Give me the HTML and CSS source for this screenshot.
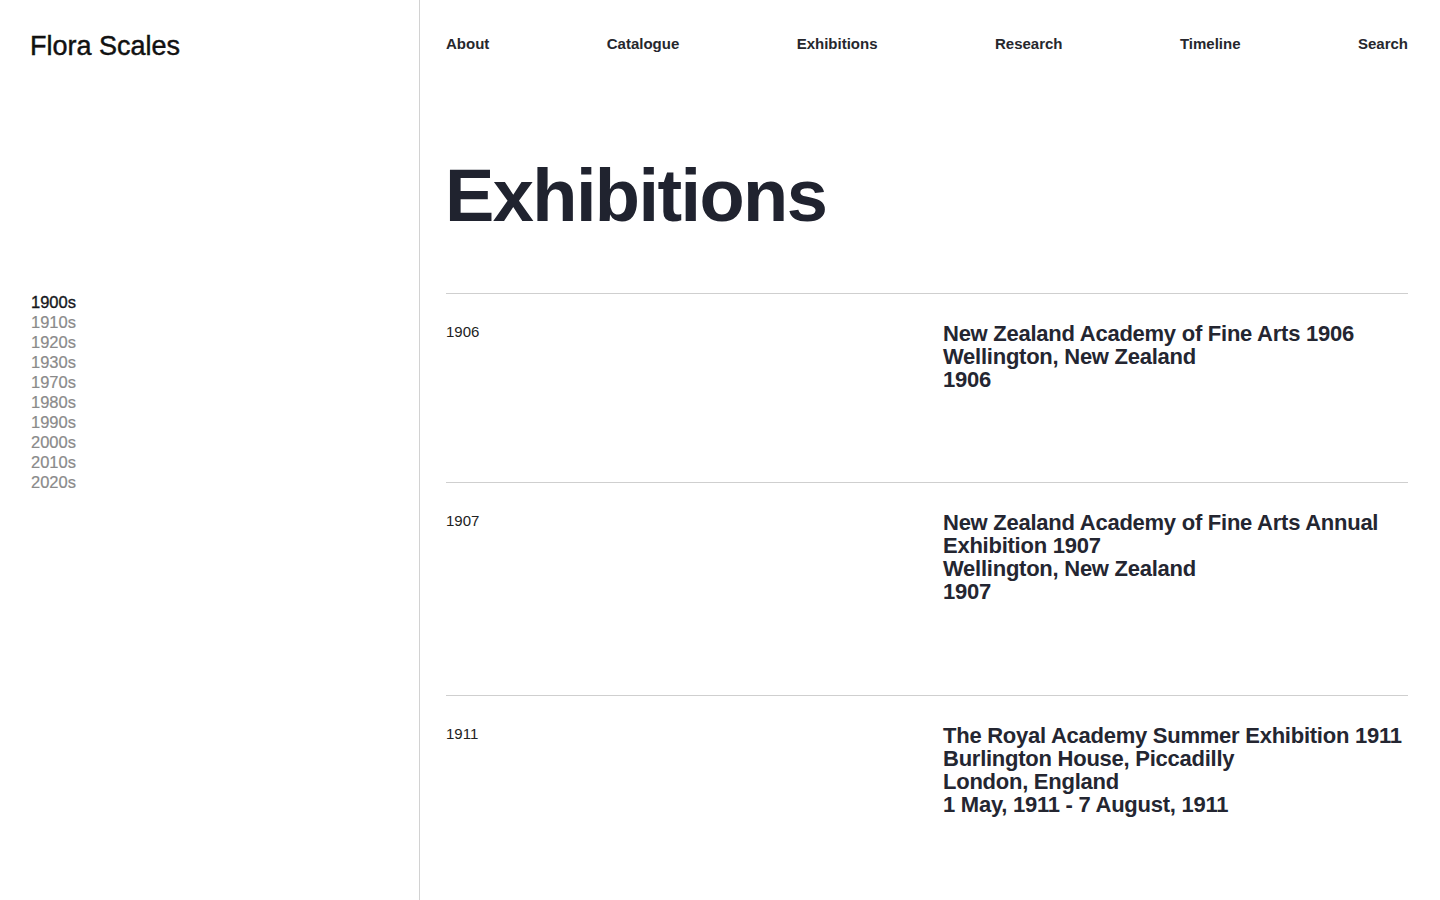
FILE: index.html
```html
<!DOCTYPE html>
<html lang="en">
<head>
<meta charset="utf-8">
<title>Exhibitions — Flora Scales</title>
<link rel="stylesheet" href="styles.css">
</head>
<body>
<div class="page">
  <aside class="sidebar">
    <div class="logo">Flora Scales</div>
    <ul class="decades">
      <li class="active">1900s</li>
      <li>1910s</li>
      <li>1920s</li>
      <li>1930s</li>
      <li>1970s</li>
      <li>1980s</li>
      <li>1990s</li>
      <li>2000s</li>
      <li>2010s</li>
      <li>2020s</li>
    </ul>
  </aside>
  <main class="main">
    <nav class="nav">
      <a>About</a>
      <a>Catalogue</a>
      <a>Exhibitions</a>
      <a>Research</a>
      <a>Timeline</a>
      <a>Search</a>
    </nav>
    <h1 class="title">Exhibitions</h1>
    <section class="list">
      <article class="row">
        <div class="year">1906</div>
        <div class="info">
          <div>New Zealand Academy of Fine Arts 1906</div>
          <div>Wellington, New Zealand</div>
          <div>1906</div>
        </div>
      </article>
      <article class="row">
        <div class="year">1907</div>
        <div class="info">
          <div>New Zealand Academy of Fine Arts Annual Exhibition 1907</div>
          <div>Wellington, New Zealand</div>
          <div>1907</div>
        </div>
      </article>
      <article class="row">
        <div class="year">1911</div>
        <div class="info">
          <div>The Royal Academy Summer Exhibition 1911</div>
          <div>Burlington House, Piccadilly</div>
          <div>London, England</div>
          <div>1 May, 1911 - 7 August, 1911</div>
        </div>
      </article>
    </section>
  </main>
</div>
</body>
</html>
```

FILE: styles.css
```css
* { box-sizing: border-box; }
html, body {
  margin: 0;
  padding: 0;
  background: #fff;
}
body {
  font-family: "Liberation Sans", Arial, Helvetica, sans-serif;
  color: #20232e;
}
.page {
  display: flex;
  min-height: 900px;
}
.sidebar {
  width: 420px;
  flex: 0 0 420px;
  border-right: 1px solid #d2d2d2;
  padding: 30px 30px 0 30px;
}
.logo {
  font-size: 27px;
  line-height: 32px;
  color: #111;
  letter-spacing: 0;
  -webkit-text-stroke: 0.45px #111;
}
.decades {
  list-style: none;
  margin: 230px 0 0 1px;
  padding: 0;
}
.decades li {
  font-size: 16.5px;
  line-height: 20px;
  color: #8a8a8a;
  -webkit-text-stroke: 0.2px #8a8a8a;
}
.decades li.active {
  color: #15171c;
  -webkit-text-stroke: 0.35px #15171c;
}
.main {
  flex: 1;
  padding: 34px 32px 0 26px;
}
.nav {
  display: flex;
  justify-content: space-between;
}
.nav a {
  font-size: 15px;
  line-height: 20px;
  font-weight: 700;
  color: #26272d;
}
.title {
  margin: 105px 0 60px -1px;
  font-size: 74px;
  line-height: 74px;
  font-weight: 700;
  letter-spacing: -1.6px;
  color: #20232f;
}
.row {
  display: grid;
  grid-template-columns: 1fr 1fr;
  column-gap: 32px;
  border-top: 1px solid #cfcfcf;
  padding: 28px 0 91.4px;
}
.year {
  font-size: 15px;
  line-height: 20px;
  color: #222;
}
.info {
  font-size: 22px;
  line-height: 23px;
  font-weight: 700;
  letter-spacing: -0.25px;
  color: #242631;
}
```
